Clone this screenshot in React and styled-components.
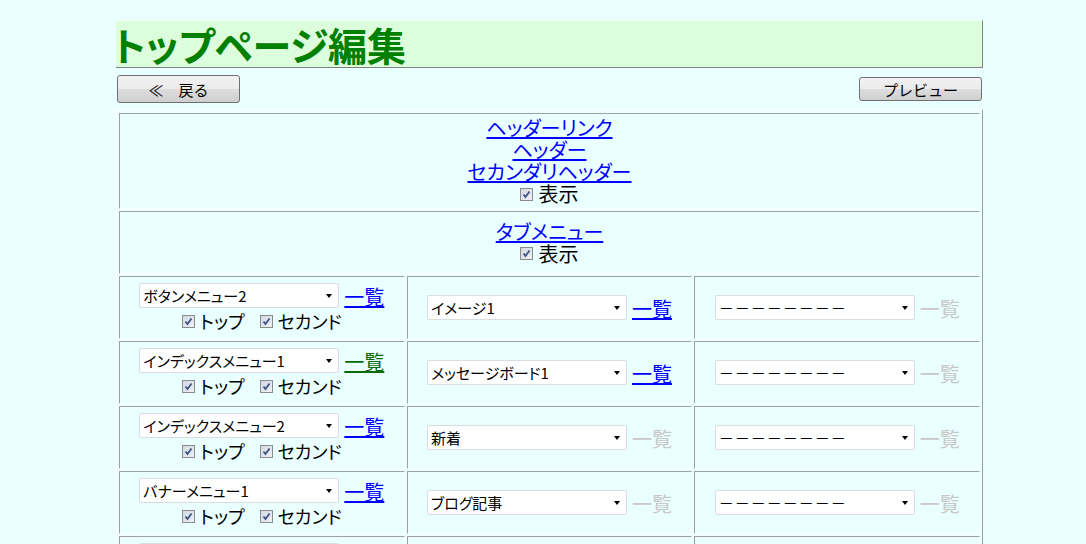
import styled, { createGlobalStyle } from 'styled-components';

const GlobalStyle = createGlobalStyle`
    body {
        margin: 0;
        background: #eaffff;
        font-family: "Noto Sans CJK JP", "Liberation Sans", sans-serif;
        font-feature-settings: "palt" 1;
        color: #000;
    }
`;

const Page = styled.div`
    width: 867px;
    margin-left: 116px;
    padding-top: 20px;
`;

const TitleBar = styled.div`
    height: 46px;
    background: #dcfedc;
    border-top: 1px solid #f4fff4;
    border-right: 1px solid #7f7f7f;
    border-bottom: 1px solid #7f7f7f;
    display: flex;
    align-items: center;
`;

const Title = styled.h1`
    margin: 0 0 0 -3px;
    font-size: 39px;
    line-height: 46px;
    font-weight: bold;
    color: #008000;
`;

const Toolbar = styled.div`
    display: flex;
    justify-content: space-between;
    align-items: center;
    height: 28px;
    margin: 7px 1px 6px 1px;
`;

const Button = styled.button`
    width: 123px;
    height: ${({ tall }) => (tall ? '28px' : '24px')};
    padding: 0;
    border: 1px solid #707070;
    border-radius: 3px;
    background: linear-gradient(#f2f2f2, #ebebeb 50%, #dddddd 50%, #cfcfcf);
    font-family: inherit;
    font-size: 15px;
    color: #000;
    cursor: pointer;
`;

const Table = styled.div`
    display: grid;
    grid-template-columns: repeat(3, 1fr);
    gap: 2px;
    padding: 3px 2px 2px 2px;
    border: 1px solid;
    border-color: #fff #a0a0a0 #a0a0a0 #fff;
`;

const Cell = styled.div`
    grid-column: ${({ wide }) => (wide ? '1 / -1' : 'auto')};
    min-height: 63px;
    box-sizing: border-box;
    padding: 3px 2px;
    border: 1px solid;
    border-color: #a0a0a0 #fff #fff #a0a0a0;
    display: flex;
    flex-direction: column;
    align-items: center;
    justify-content: center;
    font-size: 20px;
    line-height: 22px;
`;

const Link = styled.a`
    color: ${({ visited }) => (visited ? '#0a6a0a' : '#0000ff')};
    text-decoration: underline;
    cursor: pointer;
`;

const Disabled = styled.span`
    color: #c8c8c8;
`;

const ListLink = styled.span`
    font-size: 20px;
    line-height: 22px;
    margin-left: 5px;
`;

const SelectRow = styled.div`
    display: flex;
    align-items: flex-end;
`;

const SelectWrap = styled.div`
    position: relative;
    width: 200px;
    height: 25px;

    &::after {
        content: '';
        position: absolute;
        right: 7px;
        top: 11px;
        border-style: solid;
        border-width: 4px 3.5px 0 3.5px;
        border-color: #000 transparent transparent transparent;
        pointer-events: none;
    }
`;

const Select = styled.select`
    appearance: none;
    width: 100%;
    height: 100%;
    box-sizing: border-box;
    margin: 0;
    padding: 0 3px;
    border: 1px solid #d9dde0;
    border-radius: 2px;
    background: #fff;
    font-family: inherit;
    font-feature-settings: "palt" 1;
    font-size: 15px;
    letter-spacing: ${({ dashed }) => (dashed ? '1px' : '0')};
    color: #000;
    outline: none;
`;

const CheckRow = styled.div`
    display: flex;
    align-items: center;
    gap: 15px;
    margin-top: 2px;
    font-size: 18px;
`;

const CheckLabel = styled.label`
    display: inline-flex;
    align-items: center;
    gap: 5px;
`;

const Box = styled.span`
    width: 11px;
    height: 11px;
    border: 1px solid #8c8c8c;
    background: linear-gradient(135deg, #d4d9e2, #eef0f4);
    display: inline-flex;
    align-items: center;
    justify-content: center;
`;

const Check = ({ label }) => (
    <CheckLabel>
        <Box>
            <svg width="9" height="9" viewBox="0 0 9 9">
                <path d="M1.5 4.5 L3.5 7 L7.5 1.5" fill="none" stroke="#3e5289" strokeWidth="1.8" />
            </svg>
        </Box>
        {label}
    </CheckLabel>
);

const DASHES = '－－－－－－－－';

const Picker = ({ value, link }) => (
    <SelectRow>
        <SelectWrap>
            <Select defaultValue={value} dashed={value === DASHES}>
                <option>{value}</option>
            </Select>
        </SelectWrap>
        <ListLink>
            {link ? <Link visited={link === 'visited'}>一覧</Link> : <Disabled>一覧</Disabled>}
        </ListLink>
    </SelectRow>
);

const rows = [
    { main: 'ボタンメニュー2', mainLink: 'link', sub: 'イメージ1', subLink: 'link' },
    { main: 'インデックスメニュー1', mainLink: 'visited', sub: 'メッセージボード1', subLink: 'link' },
    { main: 'インデックスメニュー2', mainLink: 'link', sub: '新着', subLink: null },
    { main: 'バナーメニュー1', mainLink: 'link', sub: 'ブログ記事', subLink: null },
    { main: 'バナーメニュー2', mainLink: 'link', sub: DASHES, subLink: null },
];

export default function App() {
    return (
        <>
            <GlobalStyle />
            <Page>
                <TitleBar>
                    <Title>トップページ編集</Title>
                </TitleBar>
                <Toolbar>
                    <Button tall>≪　戻る</Button>
                    <Button>プレビュー</Button>
                </Toolbar>
                <Table>
                    <Cell wide>
                        <Link>ヘッダーリンク</Link>
                        <Link>ヘッダー</Link>
                        <Link>セカンダリヘッダー</Link>
                        <Check label="表示" />
                    </Cell>
                    <Cell wide>
                        <Link>タブメニュー</Link>
                        <Check label="表示" />
                    </Cell>
                    {rows.map((row) => (
                        <>
                            <Cell key={row.main + 'a'}>
                                <Picker value={row.main} link={row.mainLink} />
                                <CheckRow>
                                    <Check label="トップ" />
                                    <Check label="セカンド" />
                                </CheckRow>
                            </Cell>
                            <Cell key={row.main + 'b'}>
                                <Picker value={row.sub} link={row.subLink} />
                            </Cell>
                            <Cell key={row.main + 'c'}>
                                <Picker value={DASHES} link={null} />
                            </Cell>
                        </>
                    ))}
                </Table>
            </Page>
        </>
    );
}
